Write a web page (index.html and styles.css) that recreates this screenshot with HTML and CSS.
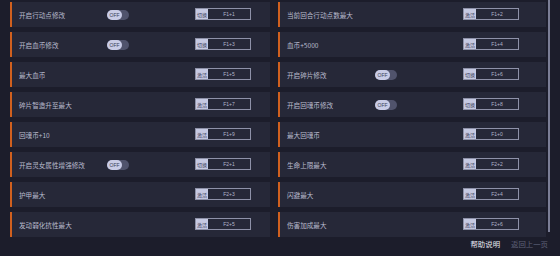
FILE: index.html
```html
<!DOCTYPE html>
<html lang="zh">
<head>
<meta charset="utf-8">
<link rel="stylesheet" href="styles.css">
</head>
<body>
<div class="page">
  <div class="list">
    <div class="row"><span class="label">开启行动点修改</span><span class="toggle"><span class="knob">OFF</span></span><span class="key"><span class="tag">切换</span><span class="combo">F1+1</span></span></div>
    <div class="row"><span class="label">当前回合行动点数最大</span><span></span><span class="key"><span class="tag">激活</span><span class="combo">F1+2</span></span></div>
    <div class="row"><span class="label">开启血币修改</span><span class="toggle"><span class="knob">OFF</span></span><span class="key"><span class="tag">切换</span><span class="combo">F1+3</span></span></div>
    <div class="row"><span class="label">血币+5000</span><span></span><span class="key"><span class="tag">激活</span><span class="combo">F1+4</span></span></div>
    <div class="row"><span class="label">最大血币</span><span></span><span class="key"><span class="tag">激活</span><span class="combo">F1+5</span></span></div>
    <div class="row"><span class="label">开启碎片修改</span><span class="toggle"><span class="knob">OFF</span></span><span class="key"><span class="tag">切换</span><span class="combo">F1+6</span></span></div>
    <div class="row"><span class="label">碎片智造升至最大</span><span></span><span class="key"><span class="tag">激活</span><span class="combo">F1+7</span></span></div>
    <div class="row"><span class="label">开启回魂币修改</span><span class="toggle"><span class="knob">OFF</span></span><span class="key"><span class="tag">切换</span><span class="combo">F1+8</span></span></div>
    <div class="row"><span class="label">回魂币+10</span><span></span><span class="key"><span class="tag">激活</span><span class="combo">F1+9</span></span></div>
    <div class="row"><span class="label">最大回魂币</span><span></span><span class="key"><span class="tag">激活</span><span class="combo">F1+0</span></span></div>
    <div class="row"><span class="label">开启灵女属性增强修改</span><span class="toggle"><span class="knob">OFF</span></span><span class="key"><span class="tag">切换</span><span class="combo">F2+1</span></span></div>
    <div class="row"><span class="label">生命上限最大</span><span></span><span class="key"><span class="tag">激活</span><span class="combo">F2+2</span></span></div>
    <div class="row"><span class="label">护甲最大</span><span></span><span class="key"><span class="tag">激活</span><span class="combo">F2+3</span></span></div>
    <div class="row"><span class="label">闪避最大</span><span></span><span class="key"><span class="tag">激活</span><span class="combo">F2+4</span></span></div>
    <div class="row"><span class="label">发动弱化抗性最大</span><span></span><span class="key"><span class="tag">激活</span><span class="combo">F2+5</span></span></div>
    <div class="row"><span class="label">伤害加成最大</span><span></span><span class="key"><span class="tag">激活</span><span class="combo">F2+6</span></span></div>
  </div>
  <div class="scrollbar"></div>
  <div class="footer">
    <span class="help">帮助说明</span>
    <span class="back">返回上一页</span>
  </div>
</div>
</body>
</html>
```

FILE: styles.css
```css
html, body {
  margin: 0;
  padding: 0;
  background: #1c1d2b;
  width: 560px;
  height: 256px;
  overflow: hidden;
  font-family: "Noto Sans CJK SC", "Noto Sans", sans-serif;
}

.page {
  position: relative;
  width: 560px;
  height: 256px;
  padding-top: 2px;
  box-sizing: border-box;
}

.list {
  display: grid;
  grid-template-columns: 260px 268px;
  column-gap: 8px;
  row-gap: 5px;
  padding-left: 10px;
}

.row {
  height: 25px;
  background: #262838;
  border-left: 2px solid #d0601f;
  display: grid;
  grid-template-columns: 88px 22px 56px;
  column-gap: 0;
  align-items: center;
  padding-left: 7px;
  box-sizing: border-box;
}

.row .key {
  margin-left: 66px;
}

.label {
  font-size: 6.6px;
  color: #b9bbcd;
  white-space: nowrap;
  letter-spacing: 0;
}

.toggle {
  width: 22px;
  height: 10px;
  border-radius: 5px;
  background: #50536c;
  display: flex;
  align-items: center;
}

.knob {
  width: 15px;
  height: 10px;
  border-radius: 5px;
  background: #c9cce6;
  color: #3a3d58;
  font-family: "Liberation Sans", sans-serif;
  font-size: 5px;
  display: flex;
  align-items: center;
  justify-content: center;
}

.key {
  width: 56px;
  height: 12px;
  border: 1px solid #8e91a8;
  box-sizing: border-box;
  display: flex;
  align-items: stretch;
  margin-top: -1px;
}

.tag {
  width: 12px;
  background: #c6c9e2;
  color: #3d405a;
  font-size: 5px;
  display: flex;
  align-items: center;
  justify-content: center;
  white-space: nowrap;
}

.combo {
  flex: 1;
  color: #b3b6cb;
  font-family: "Liberation Sans", sans-serif;
  font-size: 5px;
  display: flex;
  align-items: center;
  justify-content: center;
}

.scrollbar {
  position: absolute;
  left: 548px;
  top: 0;
  width: 2px;
  height: 232px;
  background: #7b7e96;
}

.footer {
  display: flex;
  justify-content: flex-end;
  gap: 11px;
  padding-right: 12px;
  margin-top: 1px;
  font-size: 7.4px;
}

.help {
  color: #e8e9f2;
}

.back {
  color: #5e6178;
}
```
